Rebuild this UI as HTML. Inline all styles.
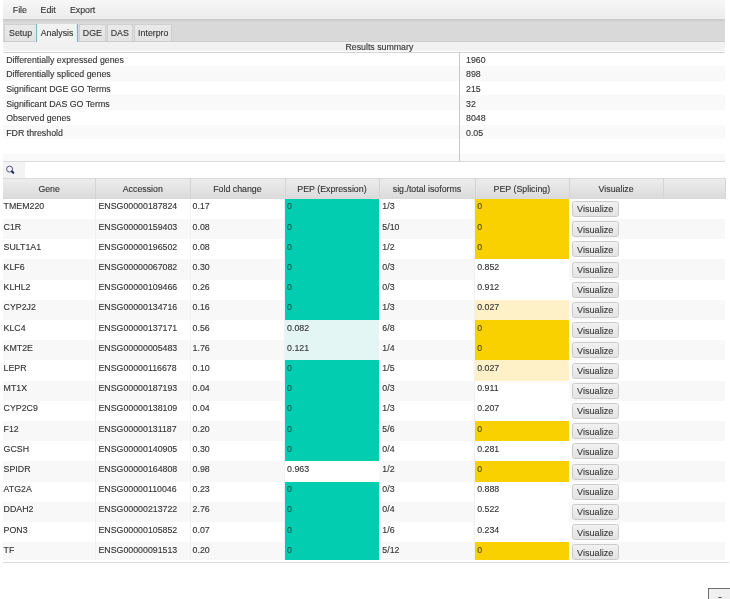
<!DOCTYPE html><html><head><meta charset="utf-8"><style>
*{margin:0;padding:0;box-sizing:border-box}
html,body{width:730px;height:599px;overflow:hidden;background:#fff}
body{position:relative;font-family:"Liberation Sans",sans-serif;font-size:8.8px;color:#333;-webkit-text-stroke:0.12px currentColor}
.abs{position:absolute}
#wrap{position:absolute;left:0;top:0;width:730px;height:599px;overflow:hidden;filter:blur(0.35px)}
#menubar{left:3px;top:0;width:722px;height:19px;background:linear-gradient(#f7f7f7,#ececec)}
#menubar span{position:absolute;top:5px;color:#333}
#mline{left:3px;top:19.2px;width:722px;height:3px;background:linear-gradient(#c8c8c8,#d6d6d6)}
#tabbar{left:3px;top:22.2px;width:722px;height:19.5px;background:#d9d9d9}
.tab{position:absolute;top:23.5px;height:18.2px;background:linear-gradient(#e9e9e9,#e2e2e2);border:1px solid #d0d0d0;border-bottom:none;color:#333}
.tab span{position:absolute;top:3.4px;left:0;right:0;text-align:center}
.tab.sel span{top:4.4px}
.tab.sel{background:#f2f2f2;border:none;border-left:1px solid #80b4c4;border-right:1px solid #80b4c4;box-shadow:inset 1px 0 0 #dcf0f6,inset -1px 0 0 #dcf0f6;height:18.2px}
#content{left:3px;top:41.7px;width:722px;height:9.8px;background:#f1f1f1}
#sumhdr{left:345.4px;top:42.7px;line-height:9px;color:#333}
#sumline{left:3px;top:51.5px;width:722px;height:1px;background:#d4d4d4}
.srow{position:absolute;left:3px;width:722px;height:14.65px}
.srow.odd{background:#f9f9f9}
.srow .l{position:absolute;left:3.2px;top:3.1px}
.srow .r{position:absolute;left:463px;top:3.1px}
#sdiv{left:459.2px;top:52px;width:1px;height:109.5px;background:#c8c8c8}
#sbot{left:3px;top:161px;width:722px;height:1px;background:#dcdcdc}
#search{left:3px;top:162px;width:722px;height:16.3px;background:#fff}
#sicon{left:3px;top:162px;width:22px;height:16.3px;background:#f3f3f3}
#thead{left:3px;top:178px;width:722px;height:20.7px;background:linear-gradient(#ededed,#dadada);border-top:1px solid #d9d9d9}
.th{position:absolute;top:178px;height:20.7px;text-align:center;line-height:22.4px;color:#333;border-right:1px solid #d4d4d4}
.row{position:absolute;left:3px;width:722px;background:#fff}
.row.odd{background:#f8f8f8}
.c{position:absolute;top:0;bottom:0;border-right:1px solid #f1f1f1;padding-left:4px;line-height:10px;padding-top:2.75px;color:#333;overflow:hidden;white-space:nowrap}
.teal,.lteal,.yel,.lyel,.wh{border-right-color:transparent}
.wh{background:#fff}
.teal{background:#02cdb0;color:#155a4c}
.lteal{background:#e3f6f3}
.yel{background:#f9d000;color:#5a4600}
.lyel{background:#fef1c8}
.btn{position:absolute;height:16px;width:46.8px;border:1px solid #cbcbcb;border-radius:2.5px;background:linear-gradient(#f1f1f1,#e3e3e3);text-align:center;line-height:10px;padding-top:2.5px;color:#3a3a3a;font-size:9.1px}
#tbot{left:3px;width:725.5px;height:1px;background:#d8d8d8}
#box{left:708.4px;top:588.4px;width:25px;height:15px;border:1px solid #6e6e6e;background:#f0f0f0}
#boxdot{left:718.4px;top:596.7px;width:4px;height:1.5px;border-radius:50%;background:#555}
</style></head><body><div id="wrap">
<div id="menubar" class="abs"><span style="left:9.8px">File</span><span style="left:37.6px">Edit</span><span style="left:66.9px">Export</span></div>
<div id="mline" class="abs"></div>
<div id="tabbar" class="abs"></div>
<div class="tab" style="left:4.2px;width:32.8px"><span>Setup</span></div>
<div class="tab sel" style="left:36.3px;width:41.60000000000001px"><span>Analysis</span></div>
<div class="tab" style="left:78.9px;width:27.0px"><span>DGE</span></div>
<div class="tab" style="left:106.6px;width:26.400000000000006px"><span>DAS</span></div>
<div class="tab" style="left:134.2px;width:38.20000000000002px"><span>Interpro</span></div>
<div class="abs" style="left:3px;top:40.6px;width:33.3px;height:1px;background:#cdcdcd"></div><div class="abs" style="left:77.9px;top:40.6px;width:647.1px;height:1px;background:#cdcdcd"></div>
<div id="content" class="abs"></div>
<div id="sumhdr" class="abs">Results summary</div>
<div id="sumline" class="abs"></div>
<div class="srow" style="top:51.50px"><span class="l">Differentially expressed genes</span><span class="r">1960</span></div>
<div class="srow odd" style="top:66.15px"><span class="l">Differentially spliced genes</span><span class="r">898</span></div>
<div class="srow" style="top:80.80px"><span class="l">Significant DGE GO Terms</span><span class="r">215</span></div>
<div class="srow odd" style="top:95.45px"><span class="l">Significant DAS GO Terms</span><span class="r">32</span></div>
<div class="srow" style="top:110.10px"><span class="l">Observed genes</span><span class="r">8048</span></div>
<div class="srow odd" style="top:124.75px"><span class="l">FDR threshold</span><span class="r">0.05</span></div>
<div class="srow" style="top:139.40px;height:14.65px"></div>
<div class="srow odd" style="top:154.05px;height:6.95px"></div>
<div id="sdiv" class="abs"></div>
<div id="sbot" class="abs"></div>
<div id="search" class="abs"></div>
<div id="sicon" class="abs"></div>
<svg class="abs" style="left:6px;top:165px" width="10" height="10" viewBox="0 0 10 10"><circle cx="3.6" cy="4.1" r="3.0" fill="none" stroke="#54548c" stroke-width="1.0"/><line x1="5.9" y1="6.4" x2="7.3" y2="7.8" stroke="#1f1f5c" stroke-width="2" stroke-linecap="round"/></svg>
<div id="thead" class="abs"></div>
<div class="th" style="left:3px;width:93.30px">Gene</div>
<div class="th" style="left:95.5px;width:95.60px">Accession</div>
<div class="th" style="left:190.3px;width:95.30px">Fold change</div>
<div class="th" style="left:284.8px;width:95.30px">PEP (Expression)</div>
<div class="th" style="left:379.3px;width:96.40px">sig./total isoforms</div>
<div class="th" style="left:474.9px;width:95.00px">PEP (Splicing)</div>
<div class="th" style="left:569.1px;width:95.10px">Visualize</div>
<div class="th" style="left:663.4px;width:62.40px"></div>
<div class="abs" style="left:0;top:0;width:730px;height:559.8px;overflow:hidden">
<div class="row" style="top:198.70px;height:21.00px"><div class="c " style="left:0px;width:93.10px;padding-left:0.6px">TMEM220</div><div class="c " style="left:92.5px;width:95.40px;padding-left:3.0px">ENSG00000187824</div><div class="c " style="left:187.3px;width:95.10px;padding-left:2.3px">0.17</div><div class="c teal" style="left:281.8px;width:94.50px;padding-left:2.3px">0</div><div class="c " style="left:376.3px;width:96.20px;padding-left:3.0px">1/3</div><div class="c yel" style="left:471.9px;width:94.20px;padding-left:2.3px">0</div><div class="btn" style="left:568.8px;top:2.3px">Visualize</div></div>
<div class="row odd" style="top:218.90px;height:21.00px"><div class="c " style="left:0px;width:93.10px;padding-left:0.6px">C1R</div><div class="c " style="left:92.5px;width:95.40px;padding-left:3.0px">ENSG00000159403</div><div class="c " style="left:187.3px;width:95.10px;padding-left:2.3px">0.08</div><div class="c teal" style="left:281.8px;width:94.50px;padding-left:2.3px">0</div><div class="c " style="left:376.3px;width:96.20px;padding-left:3.0px">5/10</div><div class="c yel" style="left:471.9px;width:94.20px;padding-left:2.3px">0</div><div class="btn" style="left:568.8px;top:2.3px">Visualize</div></div>
<div class="row" style="top:239.10px;height:21.00px"><div class="c " style="left:0px;width:93.10px;padding-left:0.6px">SULT1A1</div><div class="c " style="left:92.5px;width:95.40px;padding-left:3.0px">ENSG00000196502</div><div class="c " style="left:187.3px;width:95.10px;padding-left:2.3px">0.08</div><div class="c teal" style="left:281.8px;width:94.50px;padding-left:2.3px">0</div><div class="c " style="left:376.3px;width:96.20px;padding-left:3.0px">1/2</div><div class="c yel" style="left:471.9px;width:94.20px;padding-left:2.3px">0</div><div class="btn" style="left:568.8px;top:2.3px">Visualize</div></div>
<div class="row odd" style="top:259.30px;height:21.00px"><div class="c " style="left:0px;width:93.10px;padding-left:0.6px">KLF6</div><div class="c " style="left:92.5px;width:95.40px;padding-left:3.0px">ENSG00000067082</div><div class="c " style="left:187.3px;width:95.10px;padding-left:2.3px">0.30</div><div class="c teal" style="left:281.8px;width:94.50px;padding-left:2.3px">0</div><div class="c " style="left:376.3px;width:96.20px;padding-left:3.0px">0/3</div><div class="c wh" style="left:471.9px;width:94.20px;padding-left:2.3px">0.852</div><div class="btn" style="left:568.8px;top:2.3px">Visualize</div></div>
<div class="row" style="top:279.50px;height:21.00px"><div class="c " style="left:0px;width:93.10px;padding-left:0.6px">KLHL2</div><div class="c " style="left:92.5px;width:95.40px;padding-left:3.0px">ENSG00000109466</div><div class="c " style="left:187.3px;width:95.10px;padding-left:2.3px">0.26</div><div class="c teal" style="left:281.8px;width:94.50px;padding-left:2.3px">0</div><div class="c " style="left:376.3px;width:96.20px;padding-left:3.0px">0/3</div><div class="c wh" style="left:471.9px;width:94.20px;padding-left:2.3px">0.912</div><div class="btn" style="left:568.8px;top:2.3px">Visualize</div></div>
<div class="row odd" style="top:299.70px;height:21.00px"><div class="c " style="left:0px;width:93.10px;padding-left:0.6px">CYP2J2</div><div class="c " style="left:92.5px;width:95.40px;padding-left:3.0px">ENSG00000134716</div><div class="c " style="left:187.3px;width:95.10px;padding-left:2.3px">0.16</div><div class="c teal" style="left:281.8px;width:94.50px;padding-left:2.3px">0</div><div class="c " style="left:376.3px;width:96.20px;padding-left:3.0px">1/3</div><div class="c lyel" style="left:471.9px;width:94.20px;padding-left:2.3px">0.027</div><div class="btn" style="left:568.8px;top:2.3px">Visualize</div></div>
<div class="row" style="top:319.90px;height:21.00px"><div class="c " style="left:0px;width:93.10px;padding-left:0.6px">KLC4</div><div class="c " style="left:92.5px;width:95.40px;padding-left:3.0px">ENSG00000137171</div><div class="c " style="left:187.3px;width:95.10px;padding-left:2.3px">0.56</div><div class="c lteal" style="left:281.8px;width:94.50px;padding-left:2.3px">0.082</div><div class="c " style="left:376.3px;width:96.20px;padding-left:3.0px">6/8</div><div class="c yel" style="left:471.9px;width:94.20px;padding-left:2.3px">0</div><div class="btn" style="left:568.8px;top:2.3px">Visualize</div></div>
<div class="row odd" style="top:340.10px;height:21.00px"><div class="c " style="left:0px;width:93.10px;padding-left:0.6px">KMT2E</div><div class="c " style="left:92.5px;width:95.40px;padding-left:3.0px">ENSG00000005483</div><div class="c " style="left:187.3px;width:95.10px;padding-left:2.3px">1.76</div><div class="c lteal" style="left:281.8px;width:94.50px;padding-left:2.3px">0.121</div><div class="c " style="left:376.3px;width:96.20px;padding-left:3.0px">1/4</div><div class="c yel" style="left:471.9px;width:94.20px;padding-left:2.3px">0</div><div class="btn" style="left:568.8px;top:2.3px">Visualize</div></div>
<div class="row" style="top:360.30px;height:21.00px"><div class="c " style="left:0px;width:93.10px;padding-left:0.6px">LEPR</div><div class="c " style="left:92.5px;width:95.40px;padding-left:3.0px">ENSG00000116678</div><div class="c " style="left:187.3px;width:95.10px;padding-left:2.3px">0.10</div><div class="c teal" style="left:281.8px;width:94.50px;padding-left:2.3px">0</div><div class="c " style="left:376.3px;width:96.20px;padding-left:3.0px">1/5</div><div class="c lyel" style="left:471.9px;width:94.20px;padding-left:2.3px">0.027</div><div class="btn" style="left:568.8px;top:2.3px">Visualize</div></div>
<div class="row odd" style="top:380.50px;height:21.00px"><div class="c " style="left:0px;width:93.10px;padding-left:0.6px">MT1X</div><div class="c " style="left:92.5px;width:95.40px;padding-left:3.0px">ENSG00000187193</div><div class="c " style="left:187.3px;width:95.10px;padding-left:2.3px">0.04</div><div class="c teal" style="left:281.8px;width:94.50px;padding-left:2.3px">0</div><div class="c " style="left:376.3px;width:96.20px;padding-left:3.0px">0/3</div><div class="c wh" style="left:471.9px;width:94.20px;padding-left:2.3px">0.911</div><div class="btn" style="left:568.8px;top:2.3px">Visualize</div></div>
<div class="row" style="top:400.70px;height:21.00px"><div class="c " style="left:0px;width:93.10px;padding-left:0.6px">CYP2C9</div><div class="c " style="left:92.5px;width:95.40px;padding-left:3.0px">ENSG00000138109</div><div class="c " style="left:187.3px;width:95.10px;padding-left:2.3px">0.04</div><div class="c teal" style="left:281.8px;width:94.50px;padding-left:2.3px">0</div><div class="c " style="left:376.3px;width:96.20px;padding-left:3.0px">1/3</div><div class="c wh" style="left:471.9px;width:94.20px;padding-left:2.3px">0.207</div><div class="btn" style="left:568.8px;top:2.3px">Visualize</div></div>
<div class="row odd" style="top:420.90px;height:21.00px"><div class="c " style="left:0px;width:93.10px;padding-left:0.6px">F12</div><div class="c " style="left:92.5px;width:95.40px;padding-left:3.0px">ENSG00000131187</div><div class="c " style="left:187.3px;width:95.10px;padding-left:2.3px">0.20</div><div class="c teal" style="left:281.8px;width:94.50px;padding-left:2.3px">0</div><div class="c " style="left:376.3px;width:96.20px;padding-left:3.0px">5/6</div><div class="c yel" style="left:471.9px;width:94.20px;padding-left:2.3px">0</div><div class="btn" style="left:568.8px;top:2.3px">Visualize</div></div>
<div class="row" style="top:441.10px;height:21.00px"><div class="c " style="left:0px;width:93.10px;padding-left:0.6px">GCSH</div><div class="c " style="left:92.5px;width:95.40px;padding-left:3.0px">ENSG00000140905</div><div class="c " style="left:187.3px;width:95.10px;padding-left:2.3px">0.30</div><div class="c teal" style="left:281.8px;width:94.50px;padding-left:2.3px">0</div><div class="c " style="left:376.3px;width:96.20px;padding-left:3.0px">0/4</div><div class="c wh" style="left:471.9px;width:94.20px;padding-left:2.3px">0.281</div><div class="btn" style="left:568.8px;top:2.3px">Visualize</div></div>
<div class="row odd" style="top:461.30px;height:21.00px"><div class="c " style="left:0px;width:93.10px;padding-left:0.6px">SPIDR</div><div class="c " style="left:92.5px;width:95.40px;padding-left:3.0px">ENSG00000164808</div><div class="c " style="left:187.3px;width:95.10px;padding-left:2.3px">0.98</div><div class="c wh" style="left:281.8px;width:94.50px;padding-left:2.3px">0.963</div><div class="c " style="left:376.3px;width:96.20px;padding-left:3.0px">1/2</div><div class="c yel" style="left:471.9px;width:94.20px;padding-left:2.3px">0</div><div class="btn" style="left:568.8px;top:2.3px">Visualize</div></div>
<div class="row" style="top:481.50px;height:21.00px"><div class="c " style="left:0px;width:93.10px;padding-left:0.6px">ATG2A</div><div class="c " style="left:92.5px;width:95.40px;padding-left:3.0px">ENSG00000110046</div><div class="c " style="left:187.3px;width:95.10px;padding-left:2.3px">0.23</div><div class="c teal" style="left:281.8px;width:94.50px;padding-left:2.3px">0</div><div class="c " style="left:376.3px;width:96.20px;padding-left:3.0px">0/3</div><div class="c wh" style="left:471.9px;width:94.20px;padding-left:2.3px">0.888</div><div class="btn" style="left:568.8px;top:2.3px">Visualize</div></div>
<div class="row odd" style="top:501.70px;height:21.00px"><div class="c " style="left:0px;width:93.10px;padding-left:0.6px">DDAH2</div><div class="c " style="left:92.5px;width:95.40px;padding-left:3.0px">ENSG00000213722</div><div class="c " style="left:187.3px;width:95.10px;padding-left:2.3px">2.76</div><div class="c teal" style="left:281.8px;width:94.50px;padding-left:2.3px">0</div><div class="c " style="left:376.3px;width:96.20px;padding-left:3.0px">0/4</div><div class="c wh" style="left:471.9px;width:94.20px;padding-left:2.3px">0.522</div><div class="btn" style="left:568.8px;top:2.3px">Visualize</div></div>
<div class="row" style="top:521.90px;height:21.00px"><div class="c " style="left:0px;width:93.10px;padding-left:0.6px">PON3</div><div class="c " style="left:92.5px;width:95.40px;padding-left:3.0px">ENSG00000105852</div><div class="c " style="left:187.3px;width:95.10px;padding-left:2.3px">0.07</div><div class="c teal" style="left:281.8px;width:94.50px;padding-left:2.3px">0</div><div class="c " style="left:376.3px;width:96.20px;padding-left:3.0px">1/6</div><div class="c wh" style="left:471.9px;width:94.20px;padding-left:2.3px">0.234</div><div class="btn" style="left:568.8px;top:2.3px">Visualize</div></div>
<div class="row odd" style="top:542.10px;height:21.00px"><div class="c " style="left:0px;width:93.10px;padding-left:0.6px">TF</div><div class="c " style="left:92.5px;width:95.40px;padding-left:3.0px">ENSG00000091513</div><div class="c " style="left:187.3px;width:95.10px;padding-left:2.3px">0.20</div><div class="c teal" style="left:281.8px;width:94.50px;padding-left:2.3px">0</div><div class="c " style="left:376.3px;width:96.20px;padding-left:3.0px">5/12</div><div class="c yel" style="left:471.9px;width:94.20px;padding-left:2.3px">0</div><div class="btn" style="left:568.8px;top:2.3px">Visualize</div></div>
</div>
<div id="tbot" class="abs" style="top:562.2px"></div>
<div id="box" class="abs"></div><div id="boxdot" class="abs"></div>
</div></body></html>
